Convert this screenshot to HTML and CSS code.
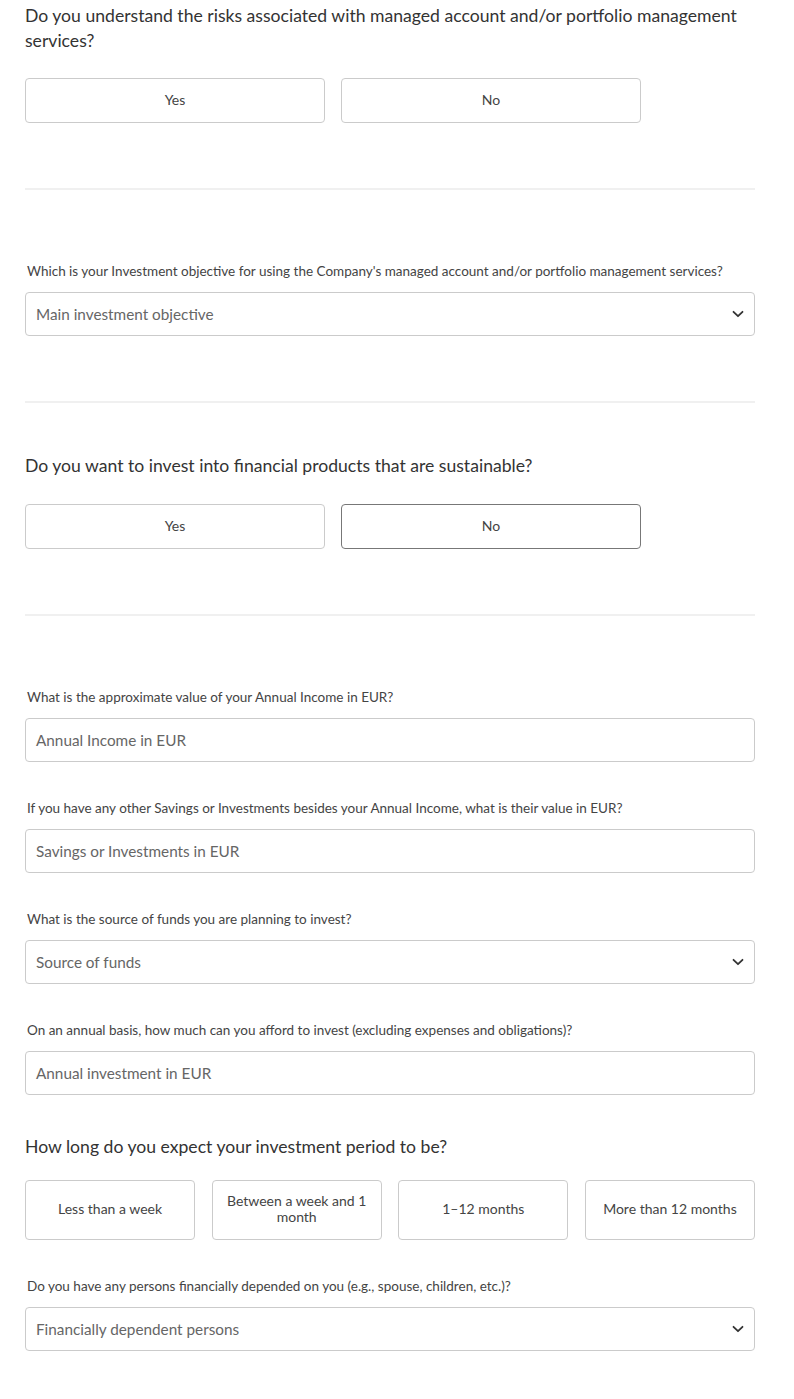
FILE: index.html
```html
<!DOCTYPE html>
<html lang="en">
<head>
<meta charset="utf-8">
<title>Investment questionnaire</title>
<link rel="stylesheet" href="styles.css">
</head>
<body>
<main class="form">
  <section class="block">
    <h2 class="question">Do you understand the risks associated with managed account and/or portfolio management services?</h2>
    <div class="choices two">
      <button class="choice">Yes</button>
      <button class="choice">No</button>
    </div>
  </section>
  <hr class="divider">
  <section class="block first-field">
    <label class="label">Which is your Investment objective for using the Company's managed account and/or portfolio management services?</label>
    <div class="field select"><span class="placeholder">Main investment objective</span>
      <svg class="chev" width="12" height="8" viewBox="0 0 12 8"><path d="M1.5 1.8 L6 6.2 L10.5 1.8" fill="none" stroke="#333" stroke-width="1.8" stroke-linecap="round" stroke-linejoin="round"/></svg>
    </div>
  </section>
  <hr class="divider">
  <section class="block after-divider">
    <h2 class="question">Do you want to invest into financial products that are sustainable?</h2>
    <div class="choices two">
      <button class="choice">Yes</button>
      <button class="choice active">No</button>
    </div>
  </section>
  <hr class="divider">
  <section class="block first-field">
    <label class="label">What is the approximate value of your Annual Income in EUR?</label>
    <div class="field"><span class="placeholder">Annual Income in EUR</span></div>
  </section>
  <section class="block next-field">
    <label class="label">If you have any other Savings or Investments besides your Annual Income, what is their value in EUR?</label>
    <div class="field"><span class="placeholder">Savings or Investments in EUR</span></div>
  </section>
  <section class="block next-field">
    <label class="label">What is the source of funds you are planning to invest?</label>
    <div class="field select"><span class="placeholder">Source of funds</span>
      <svg class="chev" width="12" height="8" viewBox="0 0 12 8"><path d="M1.5 1.8 L6 6.2 L10.5 1.8" fill="none" stroke="#333" stroke-width="1.8" stroke-linecap="round" stroke-linejoin="round"/></svg>
    </div>
  </section>
  <section class="block next-field">
    <label class="label">On an annual basis, how much can you afford to invest (excluding expenses and obligations)?</label>
    <div class="field"><span class="placeholder">Annual investment in EUR</span></div>
  </section>
  <section class="block period">
    <h2 class="question">How long do you expect your investment period to be?</h2>
    <div class="choices four">
      <button class="choice tall">Less than a week</button>
      <button class="choice tall">Between a week and 1 month</button>
      <button class="choice tall">1–12 months</button>
      <button class="choice tall">More than 12 months</button>
    </div>
  </section>
  <section class="block next-field">
    <label class="label">Do you have any persons financially depended on you (e.g., spouse, children, etc.)?</label>
    <div class="field select"><span class="placeholder">Financially dependent persons</span>
      <svg class="chev" width="12" height="8" viewBox="0 0 12 8"><path d="M1.5 1.8 L6 6.2 L10.5 1.8" fill="none" stroke="#333" stroke-width="1.8" stroke-linecap="round" stroke-linejoin="round"/></svg>
    </div>
  </section>
</main>
</body>
</html>
```
FILE: styles.css
```css
* { box-sizing: border-box; }
html, body { margin: 0; padding: 0; background: #fff; }
body {
  font-family: "Lato", "Noto Sans", sans-serif;
  color: #333;
}
.form {
  width: 730px;
  margin-left: 25px;
  padding-top: 3px;
  display: flex;
  flex-direction: column;
}
.question {
  margin: 0 0 25px;
  font-size: 17.6px;
  line-height: 25px;
  font-weight: 400;
  color: #333;
}
.after-divider { margin-top: 50px; }
.after-divider .question { margin-bottom: 26px; }
.choices {
  display: grid;
  gap: 16px;
}
.choices.two { grid-template-columns: 300px 300px; }
.choices.four { grid-template-columns: repeat(4, 1fr); gap: 16.5px; }
.choice {
  height: 45px;
  background: #fff;
  border: 1px solid #cbcbcb;
  border-radius: 4px;
  font-family: inherit;
  font-size: 14px;
  color: #444;
  padding: 0 12px 2px;
  line-height: 16px;
}
.choice.active { border-color: #777; }
.choice.tall { height: 60px; }
.divider {
  border: 0;
  height: 2px;
  background: #f0f0f0;
  margin: 65px 0 0;
  width: 730px;
}
.first-field { margin-top: 72px; }
.next-field { margin-top: 37px; }
.label {
  display: block;
  font-size: 13.5px;
  line-height: 18px;
  color: #444;
  padding-left: 2px;
  margin-bottom: 12px;
}
.field {
  height: 44px;
  border: 1px solid #cbcbcb;
  border-radius: 4px;
  display: flex;
  align-items: center;
  justify-content: space-between;
  padding: 0 10px;
}
.placeholder {
  font-size: 15.3px;
  color: #666;
}
.period { margin-top: 38.5px; }
.period .question { margin-bottom: 21.5px; }
```
